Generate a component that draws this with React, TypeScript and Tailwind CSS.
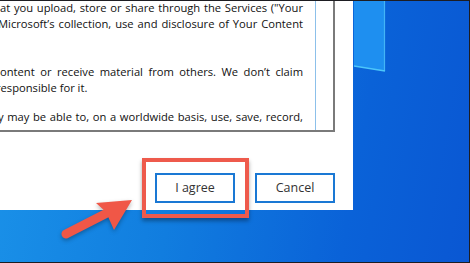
import React from "react";

// Windows licence dialog, cropped, with a tutorial-style red callout on "I agree".
const FONT = { fontFamily: '"Open Sans", "Noto Sans", sans-serif' };

const LINES = [
  { text: "at you upload, store or share through the Services (\"Your", cls: "ml-[0px] w-[303px] [text-align-last:justify]", top: "mt-[-1px]" },
  { text: "Microsoft\u2019s collection, use and disclosure of Your Content", cls: "ml-[-2px] w-[305px] [text-align-last:justify]", top: "mt-0" },
  { text: "", cls: "w-[303px]", top: "mt-0" },
  { text: "ontent or receive material from others. We don\u2019t claim", cls: "ml-[0px] w-[303px] [text-align-last:justify]", top: "mt-[16px]" },
  { text: "responsible for it.", cls: "ml-[-4px]", top: "mt-0" },
  { text: "y may be able to, on a worldwide basis, use, save, record,", cls: "ml-[-2px] w-[305px] [text-align-last:justify]", top: "mt-[13px]" },
];

function Button({ label }: { label: string }) {
  return (
    <div className="w-[80px] h-[30px] border-2 border-[#1a78d4] bg-white flex items-center justify-center text-[12.5px] text-[#333]">
      {label}
    </div>
  );
}

export default function App() {
  return (
    <div
      className="relative w-[470px] h-[263px] overflow-hidden border-t border-r border-b border-[#1d1d22] bg-[linear-gradient(100deg,#1b93e9_0%,#117ddf_40%,#0a62d8_75%,#0a57d3_100%)]"
      style={FONT}
    >
      {/* wallpaper: edge of the Windows logo pane */}
      <svg className="absolute left-[354px] top-0" width="34" height="74" viewBox="0 0 34 74" aria-hidden>
        <polygon points="0,0 31,0 31,70 0,65" fill="#1e8ff0" />
        <line x1="30.5" y1="0" x2="30.5" y2="70" stroke="#43b4f6" strokeWidth="1.2" />
        <line x1="0" y1="65" x2="31" y2="70" stroke="#4cc6fa" strokeWidth="1.6" />
      </svg>

      {/* dialog */}
      <div className="relative w-[353px] h-[209px] bg-white flex flex-col">
        <div className="w-[335px] h-[131px] border-r-2 border-b-2 border-[#7a7a7a] flex overflow-hidden">
          <div className="w-[315px] overflow-hidden text-[11.2px] leading-[16px] text-[#111]">
            {LINES.map((l, i) => (
              <div key={i} className={`h-[16px] whitespace-nowrap ${l.top} ${l.cls}`}>
                {l.text}
              </div>
            ))}
          </div>
          <div className="w-px bg-[#8cc0ea]" />
          <div className="flex-1" />
        </div>
        <div className="mt-[41px] pr-[18px] flex justify-end gap-[20px]">
          <Button label="I agree" />
          <Button label="Cancel" />
        </div>
      </div>

      {/* callout */}
      <div className="absolute left-[142px] top-[157px] w-[107px] h-[60px] border-4 border-[#ee5a4c] shadow-[0_3px_4px_rgba(0,0,0,0.35)]" />
      <svg
        className="absolute left-0 top-0"
        width="470"
        height="263"
        viewBox="0 0 470 263"
        style={{ filter: "drop-shadow(0 2px 2px rgba(0,0,0,0.3))" }}
        aria-hidden
      >
        <line x1="66" y1="233" x2="107" y2="212" stroke="#f05747" strokeWidth="9" strokeLinecap="round" />
        <polygon points="132,199 96,202 106,211 114,229" fill="#f05747" />
      </svg>
    </div>
  );
}
